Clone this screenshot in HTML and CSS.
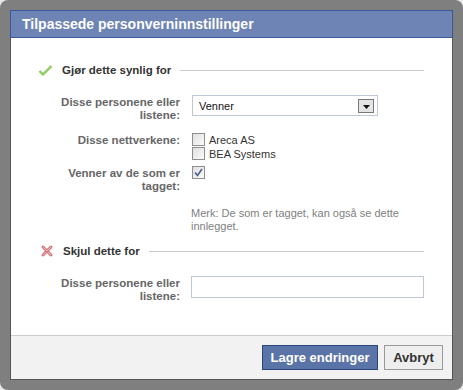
FILE: index.html
```html
<!DOCTYPE html>
<html lang="no">
<head>
  <meta charset="UTF-8" />
  <title>Tilpassede personverninnstillinger</title>
  <link rel="stylesheet" href="styles.css">
</head>
<body>
  <div class="frame">
    <div class="dialog">
      <h2 class="dialog-title">Tilpassede personverninnstillinger</h2>

      <div class="dialog-body">
        <!-- ==== SYNLIG FOR ==== -->
        <div class="section-head">
          <svg class="icon" width="15" height="13" viewBox="0 0 15 13">
            <path d="M1.5 7 L5 10.5 L13.5 2" fill="none" stroke="#7cbc45" stroke-width="2.4" stroke-linejoin="round"/>
            <path d="M1.5 7 L5 10.5 L13.5 2" fill="none" stroke="#b5e08a" stroke-width="0.9" stroke-linejoin="round"/>
          </svg>
          <span class="section-name">Gjør dette synlig for</span>
          <span class="rule"></span>
        </div>

        <div class="form-grid">
          <label class="field-label first-row">Disse personene eller listene:</label>
          <div class="select first-row">
            <span>Venner</span>
            <span class="select-btn">
              <svg width="7" height="4" viewBox="0 0 7 4"><path d="M0 0 H7 L3.5 4 Z" fill="#111"/></svg>
            </span>
          </div>

          <label class="field-label">Disse nettverkene:</label>
          <div class="check-list">
            <div class="check-row"><span class="box"></span>Areca AS</div>
            <div class="check-row"><span class="box"></span>BEA Systems</div>
          </div>

          <label class="field-label">Venner av de som er tagget:</label>
          <div class="check-list">
            <div class="check-row">
              <span class="box">
                <svg width="9" height="9" viewBox="0 0 9 9"><path d="M1 4.5 L3.5 7.5 L8 1" fill="none" stroke="#4a5f8f" stroke-width="1.6"/></svg>
              </span>
            </div>
          </div>
        </div>

        <p class="note">Merk: De som er tagget, kan også se dette innlegget.</p>

        <!-- ==== SKJUL FOR ==== -->
        <div class="section-head hide-head">
          <svg class="icon" width="12" height="12" viewBox="0 0 12 12">
            <path d="M2 2 L10 10 M10 2 L2 10" fill="none" stroke="#c65a63" stroke-width="2.8" stroke-linecap="round"/>
            <path d="M2 2 L10 10 M10 2 L2 10" fill="none" stroke="#f3b3b8" stroke-width="1.1" stroke-linecap="round"/>
          </svg>
          <span class="section-name">Skjul dette for</span>
          <span class="rule"></span>
        </div>

        <div class="form-grid">
          <label class="field-label">Disse personene eller listene:</label>
          <input class="text-input" type="text" />
        </div>
      </div>

      <div class="dialog-footer">
        <button class="btn btn-primary">Lagre endringer</button>
        <button class="btn btn-cancel">Avbryt</button>
      </div>
    </div>
  </div>
</body>
</html>
```

FILE: styles.css
```css
* { box-sizing: border-box; margin: 0; padding: 0; }

body {
  background: #e9e9e9;
  font-family: "Liberation Sans", Arial, sans-serif;
  font-size: 11px;
  color: #333;
}

.frame {
  width: 463px;
  height: 390px;
  background: #7f7f7f;
  border-radius: 8px;
  padding: 10px;
}

.dialog {
  height: 370px;
  background: #fff;
  border: 1px solid #555;
  border-top: none;
  display: flex;
  flex-direction: column;
}

.dialog-title {
  margin: 0 -1px;
  height: 28px;
  background: #6d84b4;
  border: 1px solid #3b5998;
  color: #fff;
  font-size: 14px;
  font-weight: bold;
  line-height: 26px;
  padding-left: 11px;
}

.dialog-body {
  flex: 1;
  padding: 25px 28px 0 27px;
}

/* en-têtes de section */
.section-head {
  display: flex;
  align-items: center;
  height: 14px;
}
.section-head .icon { margin-right: 9px; flex: none; }
.section-name { font-weight: bold; font-size: 11.5px; color: #333; margin-right: 9px; }
.rule { flex: 1; height: 1px; background: #c8c8c8; }

.hide-head { margin-top: 11px; }
.hide-head .icon { margin-left: 3px; margin-right: 10px; }

/* formulaire */
.form-grid {
  display: grid;
  grid-template-columns: 142px 1fr;
  column-gap: 12px;
  row-gap: 6px;
  margin-top: 18px;
}
.first-row { margin-bottom: 5px; }

.field-label {
  font-weight: bold;
  font-size: 11.5px;
  color: #666;
  text-align: right;
  line-height: 13px;
  padding: 1px 0 0 22px;
}

.select {
  width: 186px;
  height: 21px;
  border: 1px solid #bdc7d8;
  display: flex;
  align-items: center;
  justify-content: space-between;
  padding: 0 3px 0 6px;
  color: #111;
}
.select-btn {
  width: 16px;
  height: 14px;
  border: 1px solid #777;
  background: #e4e4e4;
  display: flex;
  align-items: center;
  justify-content: center;
  padding-top: 2px;
}

.check-list { display: flex; flex-direction: column; gap: 1px; }
.check-row { display: flex; align-items: center; gap: 4px; color: #333; height: 13px; }
.box {
  width: 13px;
  height: 13px;
  border: 1px solid #8f8f8f;
  background: linear-gradient(135deg, #e0e0e0, #fbfbfb);
  display: flex;
  align-items: center;
  justify-content: center;
}

.note {
  color: #808080;
  line-height: 13px;
  margin: 14px 0 0 153px;
  width: 210px;
}

.text-input {
  width: 233px;
  height: 22px;
  border: 1px solid #bdc7d8;
  margin-left: -1px;
}

/* pied de dialogue */
.dialog-footer {
  height: 44px;
  border-top: 1px solid #ccc;
  background: #f2f2f2;
  display: flex;
  justify-content: flex-end;
  align-items: center;
  gap: 6px;
  padding: 0 9px 0 0;
}

.btn {
  height: 25px;
  font-family: "Liberation Sans", Arial, sans-serif;
  font-size: 13px;
  font-weight: bold;
  padding: 0 6px;
  cursor: pointer;
}
.btn-primary {
  background: #5b74a8;
  border: 1px solid #29447e;
  color: #fff;
  width: 116px;
}
.btn-cancel {
  background: #eee;
  border: 1px solid #999;
  color: #333;
  width: 59px;
}
```
